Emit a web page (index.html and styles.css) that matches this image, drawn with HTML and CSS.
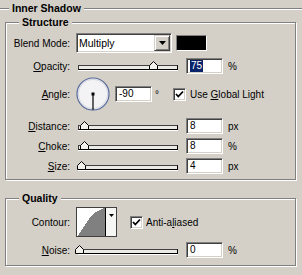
FILE: index.html
```html
<!DOCTYPE html>
<html lang="en">
<head>
    <meta charset="UTF-8">
    <meta name="viewport" content="width=device-width, initial-scale=1.0">
    <title>Inner Shadow</title>
    <link rel="stylesheet" href="styles.css">
</head>
<body>
    <div class="header">
        <span class="rule rule-short"></span>
        <span class="header-title">Inner Shadow</span>
        <span class="rule"></span>
    </div>

    <div class="group structure">
        <div class="legend">Structure</div>

        <div class="row r-blend">
            <span class="lbl">Blend Mode:</span>
            <div class="select sunken">
                <span class="select-text">Multiply</span>
                <span class="select-btn">
                    <svg width="7" height="4" viewBox="0 0 7 4"><polygon points="0,0 7,0 3.5,4" fill="#000"/></svg>
                </span>
            </div>
            <span class="swatch"></span>
        </div>

        <div class="row r-opacity">
            <span class="lbl"><u>O</u>pacity:</span>
            <div class="slider">
                <div class="track"></div>
                <svg class="thumb" style="left:73px" width="9" height="9" viewBox="0 0 9 9"><polygon points="4.5,0.5 8.5,4.5 8.5,8.5 0.5,8.5 0.5,4.5" fill="#f2f1ec" stroke="#000"/></svg>
            </div>
            <span class="field sunken"><span class="sel">75</span></span>
            <span class="unit">%</span>
        </div>

        <div class="row r-angle">
            <span class="lbl"><u>A</u>ngle:</span>
            <svg class="dial" width="34" height="34" viewBox="0 0 34 34">
                <circle cx="17" cy="17" r="16" fill="#f3f3f5" stroke="#56689b" stroke-width="1.2"/>
                <circle cx="17" cy="17" r="14.7" fill="none" stroke="#d2d5de" stroke-width="1"/>
                <line x1="17" y1="17" x2="17" y2="33" stroke="#000" stroke-width="1.2"/>
                <rect x="15.5" y="15.5" width="3" height="3" fill="#000"/>
            </svg>
            <span class="field sunken angle-field">-90</span>
            <span class="deg">°</span>
            <span class="check sunken">
                <svg width="9" height="9" viewBox="0 0 9 9"><polyline points="1,4 3.3,6.5 8,1.5" fill="none" stroke="#000" stroke-width="1.8"/></svg>
            </span>
            <span>Use <u>G</u>lobal Light</span>
        </div>

        <div class="row r-dist">
            <span class="lbl"><u>D</u>istance:</span>
            <div class="slider">
                <div class="track"></div>
                <svg class="thumb" style="left:4px" width="9" height="9" viewBox="0 0 9 9"><polygon points="4.5,0.5 8.5,4.5 8.5,8.5 0.5,8.5 0.5,4.5" fill="#f2f1ec" stroke="#000"/></svg>
            </div>
            <span class="field sunken">8</span>
            <span class="unit">px</span>
        </div>

        <div class="row r-choke">
            <span class="lbl"><u>C</u>hoke:</span>
            <div class="slider">
                <div class="track"></div>
                <svg class="thumb" style="left:4px" width="9" height="9" viewBox="0 0 9 9"><polygon points="4.5,0.5 8.5,4.5 8.5,8.5 0.5,8.5 0.5,4.5" fill="#f2f1ec" stroke="#000"/></svg>
            </div>
            <span class="field sunken">8</span>
            <span class="unit">%</span>
        </div>

        <div class="row r-size">
            <span class="lbl"><u>S</u>ize:</span>
            <div class="slider">
                <div class="track"></div>
                <svg class="thumb" style="left:1px" width="9" height="9" viewBox="0 0 9 9"><polygon points="4.5,0.5 8.5,4.5 8.5,8.5 0.5,8.5 0.5,4.5" fill="#f2f1ec" stroke="#000"/></svg>
            </div>
            <span class="field sunken">4</span>
            <span class="unit">px</span>
        </div>
    </div>

    <div class="group quality">
        <div class="legend">Quality</div>

        <div class="row r-contour">
            <span class="lbl">Contour:</span>
            <div class="contour">
                <svg class="curve" width="28" height="28" viewBox="0 0 28 28">
                    <polygon points="1,28 1,27 2,27 2,25 3,25 3,24 4,24 4,22 5,22 5,21 6,21 6,19 7,19 7,18 8,18 8,16 9,16 9,15 10,15 10,13 11,13 11,12 12,12 12,10 13,10 13,9 14,9 14,8 15,8 15,7 16,7 16,6 17,6 17,5 18,5 18,4 20,4 20,3 22,3 22,2 24,2 24,1 26,1 26,0 28,0 28,28" fill="#808080"/>
                </svg>
                <span class="contour-btn">
                    <svg width="5" height="3" viewBox="0 0 5 3"><polygon points="0,0 5,0 2.5,3" fill="#000"/></svg>
                </span>
            </div>
            <span class="check sunken aa">
                <svg width="9" height="9" viewBox="0 0 9 9"><polyline points="1,4 3.3,6.5 8,1.5" fill="none" stroke="#000" stroke-width="1.8"/></svg>
            </span>
            <span>Anti-a<u>l</u>iased</span>
        </div>

        <div class="row r-noise">
            <span class="lbl"><u>N</u>oise:</span>
            <div class="slider">
                <div class="track"></div>
                <svg class="thumb" style="left:-1px" width="9" height="9" viewBox="0 0 9 9"><polygon points="4.5,0.5 8.5,4.5 8.5,8.5 0.5,8.5 0.5,4.5" fill="#f2f1ec" stroke="#000"/></svg>
            </div>
            <span class="field sunken">0</span>
            <span class="unit">%</span>
        </div>
    </div>
</body>
</html>
```

FILE: styles.css
```css
* {
    box-sizing: border-box;
}
body {
    margin: 0;
    width: 302px;
    height: 275px;
    overflow: hidden;
    background-color: #d4d0c8;
    font-family: "Liberation Sans", Arial, sans-serif;
    font-size: 10px;
    color: #000;
}
u {
    text-underline-offset: 1px;
}

/* section header with etched rule */
.header {
    display: flex;
    height: 13px;
    margin-top: 2px;
}
.rule {
    flex: 1;
    height: 2px;
    margin-top: 6px;
    border-top: 1px solid #808080;
    border-bottom: 1px solid #fff;
}
.rule-short {
    flex: none;
    width: 9px;
}
.header-title {
    padding: 0 3px;
    font-weight: bold;
    font-size: 10.5px;
    line-height: 13px;
}

/* etched group boxes */
.group {
    margin: 7px 6px 0 5px;
    padding-bottom: 5px;
    border: 1px solid #808080;
    box-shadow: inset 1px 1px 0 #fff, 1px 1px 0 #fff;
}
.quality {
    margin-top: 18px;
    padding-bottom: 7px;
}
.legend {
    width: fit-content;
    height: 13px;
    margin: -7px 0 0 13px;
    padding: 0 3px;
    background-color: #d4d0c8;
    font-weight: bold;
    font-size: 10.5px;
    line-height: 13px;
}

/* rows */
.row {
    display: flex;
    align-items: center;
    white-space: nowrap;
}
.lbl {
    flex: none;
    width: 64px;
    margin-right: 6px;
    text-align: right;
}
.r-blend { margin-top: 4px; height: 20px; }
.r-opacity { margin-top: 5px; height: 16px; }
.r-angle { margin-top: 3px; height: 34px; }
.r-dist { margin-top: 7px; height: 16px; }
.r-choke, .r-size { margin-top: 4px; height: 16px; }
.r-contour { margin-top: 2px; height: 30px; }
.r-noise { margin-top: 5px; height: 16px; }

/* sunken 3d edge */
.sunken {
    border: 1px solid;
    border-color: #808080 #fff #fff #808080;
    box-shadow: inset 1px 1px 0 #404040, inset -1px -1px 0 #d4d0c8;
    background-color: #fff;
}

.select {
    flex: none;
    display: flex;
    width: 96px;
    height: 20px;
    padding: 1px;
}
.select-text {
    flex: 1;
    padding-left: 1px;
    font-size: 10.5px;
    line-height: 16px;
}
.select-btn {
    display: flex;
    align-items: center;
    justify-content: center;
    width: 16px;
    height: 16px;
    background-color: #d4d0c8;
    border: 1px solid;
    border-color: #d4d0c8 #404040 #404040 #d4d0c8;
    box-shadow: inset 1px 1px 0 #fff, inset -1px -1px 0 #808080;
}
.swatch {
    flex: none;
    width: 31px;
    height: 16px;
    margin-left: 4px;
    background-color: #000;
    border: 1px solid;
    border-color: #808080 #fff #fff #808080;
}

/* sliders */
.slider {
    flex: none;
    position: relative;
    width: 104px;
    height: 16px;
    margin-right: 6px;
}
.track {
    width: 100px;
    height: 5px;
    margin: 7px 0 0 2px;
    background-color: #eceae4;
    border: 1px solid #000;
    border-color: #404040 #000 #000 #404040;
    box-shadow: 0 1px 0 #fff;
}
.thumb {
    position: absolute;
    top: 3px;
}

.field {
    flex: none;
    width: 37px;
    height: 16px;
    padding: 0 3px;
    line-height: 13px;
}
.sel {
    display: inline-block;
    padding: 0 1px;
    background-color: #0a246a;
    color: #fff;
    line-height: 12px;
}
.unit {
    margin-left: 5px;
}

/* angle */
.dial {
    flex: none;
    margin-right: 5px;
}
.deg {
    flex: none;
    width: 21px;
    padding-left: 3px;
}
.check {
    flex: none;
    display: flex;
    align-items: center;
    justify-content: center;
    width: 13px;
    height: 13px;
    margin-right: 4px;
}

/* contour */
.contour {
    flex: none;
    display: flex;
    width: 41px;
    height: 30px;
    background-color: #fff;
    border: 1px solid #404040;
}
.curve {
    display: block;
}
.contour-btn {
    display: flex;
    justify-content: center;
    flex: 1;
    padding-top: 6px;
    border-left: 1px solid #000;
    background-color: #f6f6f4;
}
.aa {
    margin-left: 13px;
    margin-right: 3px;
}
```
